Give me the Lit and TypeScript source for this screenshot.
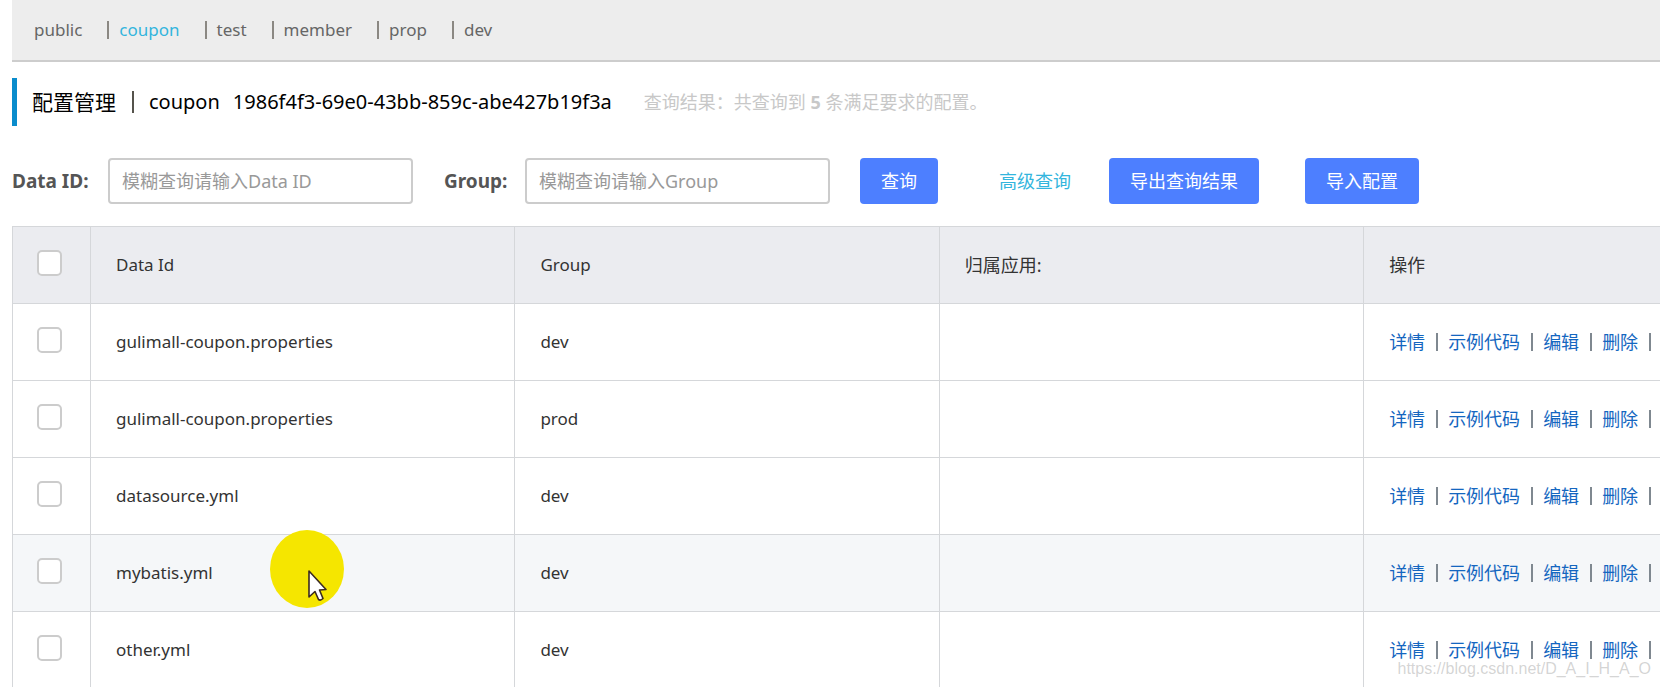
import { LitElement, html, css, svg } from "lit";
import { customElement, property, state } from "lit/decorators.js";
import { classMap } from "lit/directives/class-map.js";

interface ConfigItem {
  dataId: string;
  group: string;
  app: string;
}

@customElement("namespace-bar")
export class NamespaceBar extends LitElement {
  @property({ attribute: false }) names: string[] = [];
  @property() current = "";

  static styles = css`
    :host {
      display: block;
    }
    .bar {
      display: flex;
      align-items: center;
      height: 60px;
      padding-left: 22px;
      background: #ededed;
      border-bottom: 2px solid #cdcdcd;
      font-size: 17px;
      line-height: 24px;
    }
    .item {
      display: flex;
      align-items: center;
    }
    .name {
      color: #666;
      text-decoration: none;
      margin-right: 25px;
    }
    .name.active {
      color: #33b5dd;
    }
    .sep {
      width: 2px;
      height: 18px;
      margin-right: 10px;
      background: #8b8883;
    }
  `;

  render() {
    return html`<nav class="bar">
      ${this.names.map(
        (name, i) => html`<span class="item"
          >${i > 0 ? html`<span class="sep"></span>` : ""}<a
            class=${classMap({ name: true, active: name === this.current })}
            href="#${name}"
            >${name}</a
          ></span
        >`
      )}
    </nav>`;
  }
}

@customElement("config-table")
export class ConfigTable extends LitElement {
  @property({ attribute: false }) rows: ConfigItem[] = [];
  @property({ type: Number }) hovered = -1;

  static styles = css`
    :host {
      display: block;
      overflow: hidden;
    }
    .table {
      width: 107.8%;
      table-layout: fixed;
      border-collapse: collapse;
      color: #333;
      font-size: 17px;
      line-height: 24px;
    }
    .check-col {
      width: 78px;
    }
    .cell {
      height: 76px;
      padding: 0 0 0 25px;
      border: 1px solid #d5d7da;
      text-align: left;
      font-weight: 400;
      vertical-align: middle;
      box-sizing: content-box;
    }
    .head .cell {
      background: #ebecf0;
    }
    .cell.zh {
      font-size: 18px;
    }
    .cell.check {
      padding-left: 24px;
    }
    .row.hovered .cell {
      background: #f5f7f9;
    }
    .box {
      appearance: none;
      display: block;
      width: 25px;
      height: 26px;
      margin: 0 0 4px;
      border: 2px solid #ccc;
      border-radius: 5px;
      background: #fff;
    }
    .box:checked {
      background: #4d7fff;
    }
    .actions {
      display: flex;
      align-items: center;
      white-space: nowrap;
    }
    .action {
      color: #1466c0;
      text-decoration: none;
    }
    .sep {
      flex: none;
      width: 2px;
      height: 18px;
      margin: 0 10px 0 11px;
      background: #7f8890;
    }
  `;

  render() {
    const actions = ["详情", "示例代码", "编辑", "删除"];
    return html`<table class="table">
      <colgroup>
        <col class="check-col" />
        <col />
        <col />
        <col />
        <col />
      </colgroup>
      <thead>
        <tr class="head">
          <th class="cell check">
            <input class="box" type="checkbox" aria-label="全选" />
          </th>
          <th class="cell">Data Id</th>
          <th class="cell">Group</th>
          <th class="cell zh">归属应用:</th>
          <th class="cell zh">操作</th>
        </tr>
      </thead>
      <tbody>
        ${this.rows.map(
          (row, i) => html`<tr
            class=${classMap({ row: true, hovered: i === this.hovered })}
          >
            <td class="cell check">
              <input class="box" type="checkbox" aria-label=${row.dataId} />
            </td>
            <td class="cell">${row.dataId}</td>
            <td class="cell">${row.group}</td>
            <td class="cell zh">${row.app}</td>
            <td class="cell zh">
              <div class="actions">
                ${actions.map(
                  (a) => html`<a class="action" href="#">${a}</a
                    ><span class="sep"></span>`
                )}
              </div>
            </td>
          </tr>`
        )}
      </tbody>
    </table>`;
  }
}

@customElement("app-root")
export class AppRoot extends LitElement {
  @state() private namespaces = [
    "public",
    "coupon",
    "test",
    "member",
    "prop",
    "dev",
  ];
  @state() private rows: ConfigItem[] = [
    { dataId: "gulimall-coupon.properties", group: "dev", app: "" },
    { dataId: "gulimall-coupon.properties", group: "prod", app: "" },
    { dataId: "datasource.yml", group: "dev", app: "" },
    { dataId: "mybatis.yml", group: "dev", app: "" },
    { dataId: "other.yml", group: "dev", app: "" },
  ];

  static styles = css`
    :host {
      display: block;
      position: relative;
      height: 100vh;
      overflow: hidden;
      box-sizing: border-box;
      padding-left: 12px;
      background: #fff;
      color: #333;
      font: 18px/24px "Noto Sans", "Noto Sans CJK SC", sans-serif;
    }
    .title {
      display: flex;
      align-items: center;
      height: 48px;
      margin: 16px 0 32px;
      padding-left: 15px;
      border-left: 5px solid #0a8ccc;
      color: #000;
      font-size: 20px;
      font-weight: 400;
      white-space: pre;
    }
    .page {
      font-size: 21px;
    }
    .sep {
      width: 2px;
      height: 22px;
      margin: 0 15px 0 16px;
      background: #55534c;
    }
    .id {
      margin-left: 13px;
    }
    .result {
      margin-left: 32px;
      color: #c8c8c8;
      font-size: 18px;
    }
    .search {
      display: flex;
      align-items: center;
      margin-bottom: 22px;
      white-space: nowrap;
    }
    .label {
      width: 96px;
      color: #555;
      font-size: 19px;
      font-weight: 700;
    }
    .label.group {
      width: 81px;
      margin-left: 31px;
    }
    .field {
      box-sizing: border-box;
      width: 305px;
      height: 46px;
      padding: 0 12px;
      border: 2px solid #ccc;
      border-radius: 4px;
      background: #fff;
      color: #333;
      font: inherit;
    }
    .field::placeholder {
      color: #999;
      opacity: 1;
    }
    .btn {
      height: 46px;
      padding: 0 21px;
      border: 0;
      border-radius: 4px;
      background: #4d7fff;
      color: #fff;
      font: inherit;
    }
    .query {
      margin-left: 30px;
    }
    .advanced {
      margin: 0 38px 0 61px;
      color: #33b5dd;
      text-decoration: none;
    }
    .import {
      margin-left: 46px;
    }
    .pointer {
      position: absolute;
      left: 270px;
      top: 530px;
      pointer-events: none;
    }
    .watermark {
      position: absolute;
      right: 9px;
      bottom: 7px;
      color: rgba(160, 160, 160, 0.45);
      font: 16px/22px "Liberation Sans", sans-serif;
      text-shadow: 1px 1px 0 #fff;
      pointer-events: none;
    }
  `;

  render() {
    return html`
      <namespace-bar .names=${this.namespaces} current="coupon"></namespace-bar>
      <h1 class="title"><span class="page">配置管理</span><span class="sep"></span><span>coupon</span><span class="id">1986f4f3-69e0-43bb-859c-abe427b19f3a</span><span class="result">查询结果：共查询到 <b>5</b> 条满足要求的配置。</span></h1>
      <form class="search" @submit=${(e: Event) => e.preventDefault()}>
        <label class="label" for="data-id">Data ID:</label>
        <input
          class="field"
          id="data-id"
          type="text"
          placeholder="模糊查询请输入Data ID"
        />
        <label class="label group" for="group">Group:</label>
        <input
          class="field"
          id="group"
          type="text"
          placeholder="模糊查询请输入Group"
        />
        <button class="btn query" type="submit">查询</button>
        <a class="advanced" href="#">高级查询</a>
        <button class="btn" type="button">导出查询结果</button>
        <button class="btn import" type="button">导入配置</button>
      </form>
      <config-table .rows=${this.rows} hovered="3"></config-table>
      <svg class="pointer" width="76" height="80" viewBox="0 0 76 80" aria-hidden="true">
        ${svg`<ellipse cx="37" cy="39" rx="37" ry="39" fill="#f5e600"></ellipse>
        <path d="M39 41 L39 67 L45 61.500 L48.500 69.500 Q50.500 71 53 68.500 L49.500 60 L56 59.500 Z" fill="#fff" stroke="#3a2a20" stroke-width="1.600" stroke-linejoin="round"></path>`}
      </svg>
      <div class="watermark">https://blog.csdn.net/D_A_I_H_A_O</div>
    `;
  }
}
